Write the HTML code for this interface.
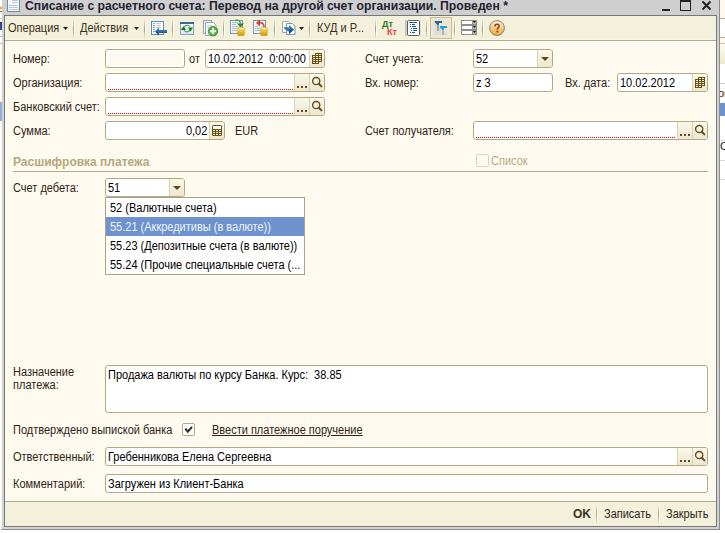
<!DOCTYPE html>
<html><head><meta charset="utf-8">
<style>
*{box-sizing:border-box;margin:0;padding:0}
html,body{width:725px;height:533px;overflow:hidden;background:#fff;font-family:"Liberation Sans",sans-serif;font-size:11px;color:#3b3020}
.a{position:absolute}
.t{position:absolute;white-space:pre;line-height:13px;height:13px}
.lbl{color:#2e2516}
.inp{position:absolute;border:1px solid #b3a983;border-radius:3px;background:#fff;height:19px}
.ro{background:#fffaef;box-shadow:inset 0 0 0 2px #fff}
.val{position:absolute;color:#000;white-space:pre;line-height:13px}
.btn{position:absolute;top:0;bottom:0;width:15px;border-left:1px solid #d9d2b6;background:linear-gradient(#fbf8ea,#ede7cf)}
.btn.last{border-radius:0 2px 2px 0}
.sep{position:absolute;width:2px;background:linear-gradient(rgba(166,158,120,0),#a69e78 50%,rgba(166,158,120,0)) 0 0/1px 100% no-repeat,linear-gradient(rgba(255,255,255,0),#fff 50%,rgba(255,255,255,0)) 1px 0/1px 100% no-repeat}
.n{font-size:12px;transform:scaleX(0.9167);transform-origin:0 0}
.red{position:absolute;height:1px;background:repeating-linear-gradient(90deg,#ff0000 0 1px,transparent 1px 2px)}
</style></head><body>
<!-- background window strips -->
<div class="a" style="left:720px;top:0;width:5px;height:533px;background:#fff"></div>
<div class="a" style="left:720px;top:0;width:5px;height:18px;background:#fdf9ee"></div>
<div class="a" style="left:720px;top:18px;width:5px;height:1px;background:#b9ae88"></div>
<div class="a" style="left:720px;top:37px;width:5px;height:1px;background:#b9ae88"></div>
<div class="a" style="left:720px;top:38px;width:5px;height:5px;background:#fdf9ee"></div>
<div class="a" style="left:720px;top:43px;width:5px;height:1px;background:#c8c0a0"></div>
<div class="a" style="left:720px;top:44px;width:5px;height:20px;background:linear-gradient(#fcfbf2,#ede9cc)"></div>

<div class="a" style="left:720px;top:103px;width:5px;height:13px;background:#6d92ce"></div>

<div class="a" style="left:720px;top:160px;width:5px;height:1px;background:#d8d8d8"></div>
<div class="a" style="left:720px;top:179px;width:5px;height:1px;background:#d8d8d8"></div>
<div class="a" style="left:0;top:0;width:2px;height:533px;background:#fffdf6"></div>
<div class="a" style="left:0;top:102px;width:2px;height:19px;background:#8fb0e0"></div>
<div class="a" style="left:0;top:7px;width:2px;height:2px;background:#eea050"></div>
<div class="a" style="left:0;top:11px;width:2px;height:1px;background:#d05030"></div>
<div class="a" style="left:0;top:18px;width:2px;height:1px;background:#c8c0a0"></div>
<div class="a" style="left:0;top:22px;width:2px;height:8px;background:linear-gradient(#503070,#3050b0)"></div>
<div class="a" style="left:0;top:36px;width:2px;height:1px;background:#c8c0a0"></div>
<div class="a" style="left:0;top:43px;width:2px;height:1px;background:#c8c0a0"></div>
<div class="a" style="left:720px;top:83px;width:5px;height:1px;background:#c4ccd6"></div>
<div class="a" style="left:720px;top:140px;width:5px;height:1px;background:#d8d8d8"></div>
<div class="t" style="left:718px;top:87px;color:#1a1a30;font-size:11px">or</div>
<div class="t" style="left:720px;top:140px;color:#1a1a30;font-size:11px">C</div>


<!-- window frame -->
<div class="a" style="left:2px;top:0;width:718px;height:530px;background:#d2d2d2"></div>
<div class="a" style="left:719px;top:0;width:1px;height:530px;background:#8c8c8c"></div>
<div class="a" style="left:1px;top:529px;width:719px;height:1px;background:#8c8c8c"></div>
<div class="a" style="left:4px;top:15px;width:713px;height:512px;background:#777"></div>
<div class="a" style="left:5px;top:16px;width:711px;height:510px;background:#fffaef"></div>

<!-- title bar -->
<div class="a" style="left:2px;top:0;width:717px;height:15px;background:#cfcfcf"></div>
<svg class="a" style="left:7px;top:0" width="13" height="12">
  <rect x="0.5" y="-2" width="12" height="13.5" fill="#f4f8fc" stroke="#6e8aa0"/>
  <path d="M5 0.5h6M5 2.5h6M2 5.5h9M2 7.5h9M2 9.5h9" stroke="#b9c9d8" stroke-width="1"/>
</svg>
<div class="t" style="left:25px;top:-1px;font-weight:bold;font-size:13px;color:#23232f;transform:scaleX(0.938);transform-origin:0 0">Списание с расчетного счета: Перевод на другой счет организации. Проведен *</div>
<div class="a" style="left:662px;top:9px;width:8px;height:2px;background:#222"></div>
<div class="a" style="left:680px;top:-1px;width:11px;height:12px;border:1px solid #222;border-top-width:3px"></div>
<svg class="a" style="left:701px;top:0" width="12" height="12"><path d="M1.5 1.5L9.5 9.5M9.5 1.5L1.5 9.5" stroke="#222" stroke-width="2"/></svg>

<!-- toolbar -->
<div class="a" style="left:5px;top:16px;width:711px;height:24px;background:#f3f0dc"></div>
<div class="a" style="left:5px;top:39px;width:711px;height:1px;background:#f7f4e6"></div>
<div class="a" style="left:5px;top:40px;width:711px;height:1px;background:#b3a983"></div>
<div class="a" style="left:5px;top:41px;width:711px;height:1px;background:#fffff6"></div>

<!-- toolbar items -->
<div class="n t" style="left:8px;top:22px">Операция</div>
<svg class="a" style="left:63px;top:27px" width="5" height="3"><path d="M0 0h5L2.5 3z" fill="#2a1e08"/></svg>
<div class="sep" style="left:73px;top:19px;height:20px"></div>
<div class="n t" style="left:80px;top:22px">Действия</div>
<svg class="a" style="left:134px;top:27px" width="5" height="3"><path d="M0 0h5L2.5 3z" fill="#2a1e08"/></svg>
<div class="sep" style="left:144px;top:19px;height:20px"></div>
<!-- icon1: doc with arrow -->
<svg class="a" style="left:151px;top:21px" width="17" height="16">
 <rect x="0.5" y="0.5" width="12" height="13" fill="#fff" stroke="#5f8ab6"/>
 <path d="M2 2.5h2M2 4.5h2M2 6.5h2M2 8.5h2M2 10.5h2" stroke="#7fa6cc"/>
 <path d="M5 2.5h5M5 4.5h5M5 6.5h5" stroke="#c4c8ce"/>
 <path d="M4 10.5L8 6.5V9H16V12H8V14.5Z" fill="#2f72b0"/>
 <path d="M8 11H16V12H8V14.5L4 10.5Z" fill="#1f5a94"/>
</svg>
<div class="sep" style="left:172px;top:19px;height:20px"></div>
<!-- icon2: refresh window -->
<svg class="a" style="left:180px;top:22px" width="14" height="13">
 <defs><linearGradient id="wg" x1="0" y1="0" x2="0" y2="1"><stop offset="0" stop-color="#fff"/><stop offset="1" stop-color="#d6e2ee"/></linearGradient></defs>
 <rect x="0.5" y="0.5" width="13" height="12" fill="url(#wg)" stroke="#8aa2ba"/>
 <rect x="0" y="0" width="14" height="2" fill="#3a6898"/>
 <path d="M3.6 7A3.5 3.3 0 0 1 10 4.8" stroke="#4aa04a" stroke-width="1.1" fill="none"/>
 <path d="M10.4 6A3.5 3.3 0 0 1 4 8.3" stroke="#4aa04a" stroke-width="1.1" fill="none"/>
 <path d="M0.8 8L3.4 4.2 6 8z" fill="#1c7a1c"/>
 <path d="M8 5.5H13L10.5 9.5z" fill="#1c7a1c"/>
</svg>
<!-- icon3: copy with plus -->
<svg class="a" style="left:202px;top:20px" width="17" height="17">
 <rect x="1.5" y="0.5" width="8" height="13" fill="#f2f5f9" stroke="#8fa3b8"/>
 <path d="M3.5 2.5h8l2.5 2.5v10.5h-10.5z" fill="#fff" stroke="#8fa3b8"/>
 <path d="M5 5.5h5M5 7.5h3" stroke="#c0c8d0"/>
 <circle cx="11" cy="11.2" r="4.8" fill="#5fae4a" stroke="#3d8a30" stroke-width="0.8"/>
 <path d="M11 8.3v5.8M8.1 11.2h5.8" stroke="#fff" stroke-width="1.9"/>
</svg>
<div class="sep" style="left:223px;top:19px;height:20px"></div>
<!-- icon4: doc coins green arrow -->
<svg class="a" style="left:229px;top:19px" width="17" height="18">
 <rect x="1.5" y="1.5" width="12" height="13" fill="#eef3f8" stroke="#7d98b3"/>
 <path d="M3 3.5h6M3 5.5h4M3 7.5h6M3 9.5h5M3 11.5h5" stroke="#b0bcc8"/>
 <path d="M6 1.5C9 0.5 11 1.5 11.5 4.5" stroke="#3aa03a" stroke-width="1.4" fill="none"/>
 <path d="M8 4.5h7l-3.5 4z" fill="#238a23"/>
 <ellipse cx="12" cy="15.5" rx="3.8" ry="1.6" fill="#d9a514"/>
 <ellipse cx="12" cy="13.5" rx="3.8" ry="1.6" fill="#e9b92a" stroke="#c3900c" stroke-width="0.5"/>
 <ellipse cx="12" cy="11.5" rx="3.8" ry="1.6" fill="#f6d457" stroke="#c3900c" stroke-width="0.5"/>
 <ellipse cx="12" cy="9.7" rx="3.8" ry="1.5" fill="#fbe78a" stroke="#c3900c" stroke-width="0.5"/>
</svg>
<!-- icon5: doc coins red arrow -->
<svg class="a" style="left:252px;top:19px" width="17" height="18">
 <rect x="1.5" y="1.5" width="12" height="13" fill="#eef3f8" stroke="#7d98b3"/>
 <path d="M3 7.5h3M3 9.5h5M3 11.5h5" stroke="#b0bcc8"/>
 <path d="M7 4C10 3 12 4.5 12 8" stroke="#e23a28" stroke-width="1.6" fill="none"/>
 <path d="M8 0.5v7l-4-3.5z" fill="#e23a28"/>
 <ellipse cx="12" cy="15.5" rx="3.8" ry="1.6" fill="#d9a514"/>
 <ellipse cx="12" cy="13.5" rx="3.8" ry="1.6" fill="#e9b92a" stroke="#c3900c" stroke-width="0.5"/>
 <ellipse cx="12" cy="11.5" rx="3.8" ry="1.6" fill="#f6d457" stroke="#c3900c" stroke-width="0.5"/>
 <ellipse cx="12" cy="9.7" rx="3.8" ry="1.5" fill="#fbe78a" stroke="#c3900c" stroke-width="0.5"/>
</svg>
<div class="sep" style="left:274px;top:19px;height:20px"></div>
<!-- icon6: docs blue arrow -->
<svg class="a" style="left:281px;top:20px" width="17" height="17">
 <path d="M1.5 1.5h6l1.5 1.5v9.5h-7.5z" fill="#fff" stroke="#a8a8a0"/>
 <path d="M5.5 3.5h6l2.5 2.5v8.5h-8.5z" fill="#f4f8fc" stroke="#7d98b3"/>
 <path d="M2.5 7.5C4 6.5 6 7 8 7.5V5l5 4.5-5 4.5v-2.5C6 11 4 10 2.5 7.5z" fill="#3a7ab8"/>
 <path d="M8 11.5v2.5l5-4.5H8z" fill="#1f4f85"/>
</svg>
<svg class="a" style="left:299px;top:27px" width="5" height="3"><path d="M0 0h5L2.5 3z" fill="#2a1e08"/></svg>
<div class="sep" style="left:309px;top:19px;height:20px"></div>
<div class="n t" style="left:317px;top:22px">КУД и Р...</div>
<div class="sep" style="left:375px;top:19px;height:20px"></div>
<div class="t" style="left:382px;top:18px;font-size:9px;font-weight:bold;color:#2a7a1a">Дт</div>
<div class="t" style="left:387px;top:26px;font-size:9px;font-weight:bold;color:#f03c3c">Кт</div>
<!-- list icon -->
<svg class="a" style="left:405px;top:20px" width="17" height="16">
 <rect x="0" y="0" width="2" height="16" fill="#c8c8c4"/>
 <rect x="15" y="0" width="1" height="16" fill="#dcdcd8"/>
 <rect x="2.5" y="0.5" width="12" height="15" rx="1" fill="#fff" stroke="#5e5e5e"/>
 <path d="M4 2.5h8" stroke="#1a5a8a"/>
 <path d="M5 4.5h1M5 6.5h1M6 8.5h1M6 10.5h1M5 12.5h1" stroke="#1a5a8a"/>
 <path d="M7 4.5h3M7 6.5h4M8 8.5h4M8 10.5h4M7 12.5h3" stroke="#1a5a8a"/>
</svg>
<div class="sep" style="left:426px;top:19px;height:20px"></div>
<!-- pressed button -->
<div class="a" style="left:430px;top:17px;width:22px;height:22px;border:1px solid #c9bf99;background:#ece7d0"></div>
<svg class="a" style="left:433px;top:20px" width="17" height="17">
 <path d="M1 3H3L15 15H1Z" fill="#dedede"/>
 <rect x="4" y="4" width="2" height="7" fill="#a0a0a0"/>
 <rect x="9" y="8" width="2" height="7" fill="#b4b4b4"/>
 <path d="M1.5 1H9V3H6L5.5 5H4.5L2 2.5Z" fill="#27609c"/>
 <path d="M7 6H14V8H11L10.5 10H9.5L7 7.5Z" fill="#1aa0dc"/>
</svg>
<div class="sep" style="left:454px;top:19px;height:20px"></div>
<!-- stacked fields -->
<svg class="a" style="left:461px;top:20px" width="16" height="16">
 <rect x="0" y="0" width="16" height="15" fill="#8e8e8e"/>
 <rect x="1" y="1" width="10" height="3" fill="#fff"/>
 <rect x="1" y="6" width="10" height="3" fill="#fff"/>
 <rect x="1" y="11" width="10" height="3" fill="#fff"/>
 <rect x="12" y="1" width="3" height="3" fill="#b8b8b8"/>
 <rect x="12" y="6" width="3" height="3" fill="#b8b8b8"/>
 <rect x="12" y="11" width="3" height="3" fill="#b8b8b8"/>
 <path d="M12 1h3l-1.5 2z M12 6h3l-1.5 2z M12 11h3l-1.5 2z" fill="#111"/>
</svg>
<div class="sep" style="left:482px;top:19px;height:20px"></div>
<!-- help -->
<svg class="a" style="left:489px;top:20px" width="16" height="16">
 <defs><linearGradient id="hg" x1="0" y1="0" x2="0" y2="1"><stop offset="0" stop-color="#fdf0da"/><stop offset="0.55" stop-color="#f8c77a"/><stop offset="1" stop-color="#f2a535"/></linearGradient></defs>
 <circle cx="8" cy="8" r="7.4" fill="url(#hg)" stroke="#77767a" stroke-width="0.9"/>
 <path d="M5.9 6.4C5.9 4.7 7 4.3 8.1 4.3C9.3 4.3 10.2 5 10.2 6.1C10.2 7.5 8.3 7.8 8.3 9.5" fill="none" stroke="#7a4a1e" stroke-width="1.5"/>
 <rect x="7.4" y="10.6" width="1.8" height="1.7" fill="#7a4a1e"/>
</svg>

<!-- form -->
<div class="n t lbl" style="left:13px;top:53px;">Номер:</div><div class="inp ro" style="left:105px;top:49px;width:80px;height:19px"></div><div class="n t lbl" style="left:189px;top:53px;">от</div><div class="inp" style="left:205px;top:49px;width:120px;height:19px"><div class="n val" style="left:2px;top:3px">10.02.2012  0:00:00</div><div class="btn last" style="right:0px"><svg class="a" style="left:2px;top:3px" width="10" height="11"><path d="M3 0H10V9H7V11H0V2H3Z" fill="#6b4f12"/><rect x="4" y="1" width="2" height="1" fill="#f6f0dc"/><rect x="7" y="1" width="2" height="1" fill="#f6f0dc"/><rect x="1" y="3" width="2" height="1" fill="#f6f0dc"/><rect x="4" y="3" width="2" height="1" fill="#f6f0dc"/><rect x="7" y="3" width="2" height="1" fill="#f6f0dc"/><rect x="1" y="5" width="2" height="1" fill="#f6f0dc"/><rect x="4" y="5" width="2" height="1" fill="#f6f0dc"/><rect x="7" y="5" width="2" height="1" fill="#f6f0dc"/><rect x="1" y="7" width="2" height="1" fill="#f6f0dc"/><rect x="4" y="7" width="2" height="1" fill="#f6f0dc"/><rect x="7" y="7" width="2" height="1" fill="#f6f0dc"/><rect x="1" y="9" width="2" height="1" fill="#f6f0dc"/><rect x="4" y="9" width="2" height="1" fill="#f6f0dc"/></svg></div></div><div class="n t lbl" style="left:365px;top:53px;">Счет учета:</div><div class="inp" style="left:473px;top:49px;width:80px;height:19px"><div class="n val" style="left:2px;top:3px">52</div><div class="btn last" style="right:0px"><svg class="a" style="left:3px;top:7px" width="8" height="4"><path d="M0 0h8L4 4z" fill="#5e4a12"/></svg></div></div><div class="n t lbl" style="left:13px;top:77px;">Организация:</div><div class="inp" style="left:105px;top:73px;width:220px;height:19px"><div class="btn" style="right:15px"><svg class="a" style="left:2px;top:12px" width="12" height="3"><rect x="0" y="0" width="2" height="2" fill="#5e4a1a"/><rect x="4" y="0" width="2" height="2" fill="#5e4a1a"/><rect x="8" y="0" width="2" height="2" fill="#5e4a1a"/></svg></div><div class="btn last" style="right:0px"><svg class="a" style="left:1px;top:2px" width="13" height="13"><circle cx="5.2" cy="5.1" r="3.6" fill="none" stroke="#5e4a1a" stroke-width="1.3"/><path d="M7.8 7.8l2.6 2.6" stroke="#5e4a1a" stroke-width="2" stroke-linecap="round"/></svg></div><div class="red" style="left:2px;top:15px;width:186px"></div></div><div class="n t lbl" style="left:365px;top:77px;">Вх. номер:</div><div class="inp" style="left:473px;top:73px;width:80px;height:19px"><div class="n val" style="left:2px;top:3px">z 3</div></div><div class="n t lbl" style="left:565px;top:77px;">Вх. дата:</div><div class="inp" style="left:617px;top:73px;width:91px;height:19px"><div class="n val" style="left:2px;top:3px">10.02.2012</div><div class="btn last" style="right:0px"><svg class="a" style="left:2px;top:3px" width="10" height="11"><path d="M3 0H10V9H7V11H0V2H3Z" fill="#6b4f12"/><rect x="4" y="1" width="2" height="1" fill="#f6f0dc"/><rect x="7" y="1" width="2" height="1" fill="#f6f0dc"/><rect x="1" y="3" width="2" height="1" fill="#f6f0dc"/><rect x="4" y="3" width="2" height="1" fill="#f6f0dc"/><rect x="7" y="3" width="2" height="1" fill="#f6f0dc"/><rect x="1" y="5" width="2" height="1" fill="#f6f0dc"/><rect x="4" y="5" width="2" height="1" fill="#f6f0dc"/><rect x="7" y="5" width="2" height="1" fill="#f6f0dc"/><rect x="1" y="7" width="2" height="1" fill="#f6f0dc"/><rect x="4" y="7" width="2" height="1" fill="#f6f0dc"/><rect x="7" y="7" width="2" height="1" fill="#f6f0dc"/><rect x="1" y="9" width="2" height="1" fill="#f6f0dc"/><rect x="4" y="9" width="2" height="1" fill="#f6f0dc"/></svg></div></div><div class="n t lbl" style="left:13px;top:101px;">Банковский счет:</div><div class="inp" style="left:105px;top:97px;width:220px;height:19px"><div class="btn" style="right:15px"><svg class="a" style="left:2px;top:12px" width="12" height="3"><rect x="0" y="0" width="2" height="2" fill="#5e4a1a"/><rect x="4" y="0" width="2" height="2" fill="#5e4a1a"/><rect x="8" y="0" width="2" height="2" fill="#5e4a1a"/></svg></div><div class="btn last" style="right:0px"><svg class="a" style="left:1px;top:2px" width="13" height="13"><circle cx="5.2" cy="5.1" r="3.6" fill="none" stroke="#5e4a1a" stroke-width="1.3"/><path d="M7.8 7.8l2.6 2.6" stroke="#5e4a1a" stroke-width="2" stroke-linecap="round"/></svg></div><div class="red" style="left:2px;top:15px;width:186px"></div></div><div class="n t lbl" style="left:13px;top:125px;">Сумма:</div><div class="inp" style="left:105px;top:121px;width:120px;height:19px"><div class="n val" style="right:17px;top:3px;transform-origin:100% 0">0,02</div><div class="btn last" style="right:0px"><svg class="a" style="left:2px;top:3px" width="10" height="11"><rect x="0" y="0" width="10" height="11" rx="1.5" fill="#6b4f12"/><rect x="1" y="1" width="8" height="3" fill="#fff"/><rect x="1" y="5" width="2" height="1" fill="#f6f0dc"/><rect x="4" y="5" width="2" height="1" fill="#f6f0dc"/><rect x="7" y="5" width="2" height="1" fill="#f6f0dc"/><rect x="1" y="7" width="2" height="1" fill="#f6f0dc"/><rect x="4" y="7" width="2" height="1" fill="#f6f0dc"/><rect x="7" y="7" width="2" height="1" fill="#f6f0dc"/><rect x="1" y="9" width="2" height="1" fill="#f6f0dc"/><rect x="4" y="9" width="2" height="1" fill="#f6f0dc"/><rect x="7" y="9" width="2" height="1" fill="#f6f0dc"/></svg></div></div><div class="n t lbl" style="left:235px;top:125px;">EUR</div><div class="n t lbl" style="left:365px;top:125px;">Счет получателя:</div><div class="inp" style="left:473px;top:121px;width:235px;height:19px"><div class="btn" style="right:15px"><svg class="a" style="left:2px;top:12px" width="12" height="3"><rect x="0" y="0" width="2" height="2" fill="#5e4a1a"/><rect x="4" y="0" width="2" height="2" fill="#5e4a1a"/><rect x="8" y="0" width="2" height="2" fill="#5e4a1a"/></svg></div><div class="btn last" style="right:0px"><svg class="a" style="left:1px;top:2px" width="13" height="13"><circle cx="5.2" cy="5.1" r="3.6" fill="none" stroke="#5e4a1a" stroke-width="1.3"/><path d="M7.8 7.8l2.6 2.6" stroke="#5e4a1a" stroke-width="2" stroke-linecap="round"/></svg></div><div class="red" style="left:2px;top:15px;width:199px"></div></div><div class="t" style="left:13px;top:156px;font-size:12px;font-weight:bold;color:#b5a87e">Расшифровка платежа</div><div class="a" style="left:13px;top:171px;width:695px;height:1px;background:#b3a983"></div><div class="a" style="left:476px;top:154px;width:13px;height:13px;border:1px solid #dcd5be;border-radius:2px;background:#fffaef"></div><div class="n t" style="left:491px;top:155px;color:#b9a984">Список</div><div class="n t lbl" style="left:13px;top:182px;">Счет дебета:</div><div class="inp" style="left:105px;top:178px;width:80px;height:19px"><div class="n val" style="left:2px;top:3px">51</div><div class="btn last" style="right:0px"><svg class="a" style="left:3px;top:7px" width="8" height="4"><path d="M0 0h8L4 4z" fill="#5e4a12"/></svg></div></div><div class="a" style="left:105px;top:197px;width:200px;height:78px;border:1px solid #a9a486;background:#fff">
<div class="n val" style="left:4px;top:4px">52 (Валютные счета)</div>
<div class="a" style="left:0;top:19px;width:198px;height:19px;background:#6d92ce"></div>
<div class="n val" style="left:4px;top:23px;color:#eef2fa">55.21 (Аккредитивы (в валюте))</div>
<div class="n val" style="left:4px;top:42px">55.23 (Депозитные счета (в валюте))</div>
<div class="n val" style="left:4px;top:61px">55.24 (Прочие специальные счета (...</div>
</div><div class="n t lbl" style="left:13px;top:366px;">Назначение</div><div class="n t lbl" style="left:13px;top:379px;">платежа:</div><div class="inp" style="left:105px;top:365px;width:603px;height:48px"><div class="n val" style="left:2px;top:3px">Продажа валюты по курсу Банка. Курс:  38.85</div></div><div class="n t lbl" style="left:13px;top:424px;">Подтверждено выпиской банка</div><div class="a" style="left:182px;top:423px;width:13px;height:13px;border:1px solid #b3a983;border-radius:2px;background:#fff">
<svg class="a" style="left:1px;top:1px" width="11" height="11"><path d="M1.3 3.6L3.8 6.6L8 1.8" fill="none" stroke="#2a2a2a" stroke-width="2"/></svg></div><div class="n t lbl" style="left:212px;top:424px;text-decoration:underline">Ввести платежное поручение</div><div class="n t lbl" style="left:13px;top:451px;">Ответственный:</div><div class="inp" style="left:105px;top:447px;width:603px;height:19px"><div class="n val" style="left:2px;top:3px">Гребенникова Елена Сергеевна</div><div class="btn" style="right:15px"><svg class="a" style="left:2px;top:12px" width="12" height="3"><rect x="0" y="0" width="2" height="2" fill="#5e4a1a"/><rect x="4" y="0" width="2" height="2" fill="#5e4a1a"/><rect x="8" y="0" width="2" height="2" fill="#5e4a1a"/></svg></div><div class="btn last" style="right:0px"><svg class="a" style="left:1px;top:2px" width="13" height="13"><circle cx="5.2" cy="5.1" r="3.6" fill="none" stroke="#5e4a1a" stroke-width="1.3"/><path d="M7.8 7.8l2.6 2.6" stroke="#5e4a1a" stroke-width="2" stroke-linecap="round"/></svg></div></div><div class="n t lbl" style="left:13px;top:478px;">Комментарий:</div><div class="inp" style="left:105px;top:474px;width:603px;height:19px"><div class="n val" style="left:2px;top:3px">Загружен из Клиент-Банка</div></div>
<div class="a" style="left:5px;top:501px;width:711px;height:1px;background:#b3a983"></div>
<div class="a" style="left:5px;top:502px;width:711px;height:24px;background:#f3f0dc"></div>
<div class="t" style="left:573px;top:508px;font-size:12px;font-weight:bold;color:#3d3220">OK</div>
<div class="sep" style="left:596px;top:505px;height:19px"></div>
<div class="n t lbl" style="left:604px;top:508px">Записать</div>
<div class="sep" style="left:658px;top:505px;height:19px"></div>
<div class="n t lbl" style="left:666px;top:508px">Закрыть</div>

</body></html>
